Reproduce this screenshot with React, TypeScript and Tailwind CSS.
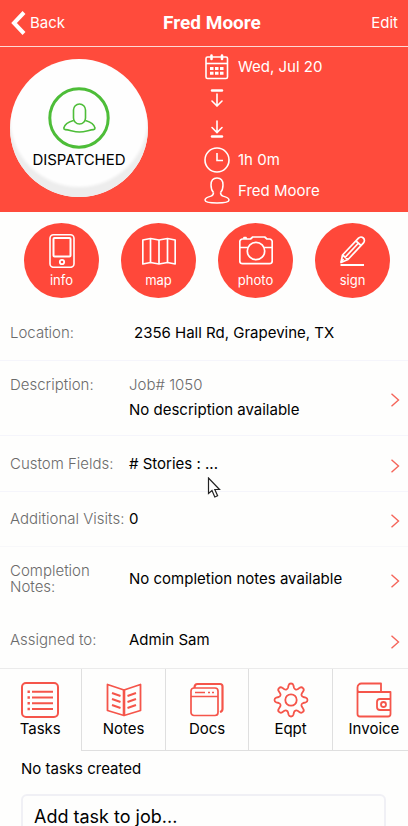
import type { ReactNode } from 'react';

const actions = [
  { label: 'info', icon: <PhoneIcon /> },
  { label: 'map', icon: <MapIcon /> },
  { label: 'photo', icon: <CameraIcon /> },
  { label: 'sign', icon: <PencilIcon /> },
];

const tabs = [
  { label: 'Tasks', icon: <TasksIcon /> },
  { label: 'Notes', icon: <NotesIcon /> },
  { label: 'Docs', icon: <DocsIcon /> },
  { label: 'Eqpt', icon: <GearIcon /> },
  { label: 'Invoice', icon: <WalletIcon /> },
];

function CalendarIcon() {
  return (
    <svg width="24" height="26" viewBox="0 0 24 26" fill="none" stroke="currentColor" strokeWidth="1.6">
      <rect x="1" y="3" width="21.5" height="21.5" rx="1.5" />
      <path d="M1 9.5h21.5" />
      <path d="M6.500 1.500v3.500M17 1.500v3.500" strokeWidth="2.6" strokeLinecap="round" />
      <g fill="currentColor" stroke="none">
        <path d="M5 13h3.500v3h-3.500zM10 13h3.500v3h-3.500zM15 13h3.500v3h-3.500zM5 17.800h3.500v3h-3.500zM10 17.800h3.500v3h-3.500zM15 17.800h3.500v3h-3.500z" />
      </g>
    </svg>
  );
}

function StartIcon() {
  return (
    <svg width="14" height="18" viewBox="0 0 14 18" fill="none" stroke="currentColor" strokeWidth="1.6" strokeLinecap="round">
      <path d="M2 1.500h10" strokeWidth="2.4" />
      <path d="M7 5v12M2 12l5 5 5-5" />
    </svg>
  );
}

function EndIcon() {
  return (
    <svg width="14" height="18" viewBox="0 0 14 18" fill="none" stroke="currentColor" strokeWidth="1.6" strokeLinecap="round">
      <path d="M7 1v11M2 7.500l5 5 5-5" />
      <path d="M2 16.500h10" strokeWidth="2.4" />
    </svg>
  );
}

function ClockIcon() {
  return (
    <svg width="26" height="26" viewBox="0 0 26 26" fill="none" stroke="currentColor" strokeWidth="1.6">
      <circle cx="13" cy="13" r="12" />
      <path d="M13 6v7.500h6" />
    </svg>
  );
}

function PersonIcon() {
  return (
    <svg width="26" height="27" viewBox="0 0 26 27" fill="none" stroke="currentColor" strokeWidth="1.5">
      <path d="M9.500 15.500C7.500 13.500 7 10.500 7 8c0-4.500 2.500-7 6-7s6 2.500 6 7c0 2.500-.5 5.500-2.500 7.500" />
      <path d="M9.500 15.500c0 2.500-.5 3-2.500 3.600-3.500 1-6 1.800-6 3.900C1 25 6 26 13 26s12-1 12-3c0-2.100-2.500-2.900-6-3.900-2-.6-2.500-1.100-2.500-3.600" />
    </svg>
  );
}

function DispatchedIcon() {
  return (
    <svg width="62" height="62" viewBox="0 0 62 62" fill="none" stroke="#4dbd38">
      <circle cx="31" cy="31" r="29.2" strokeWidth="3" />
      <g strokeWidth="1.6" strokeLinejoin="round">
        <rect x="25.5" y="17" width="12" height="20" rx="6" />
        <path d="M25.500 33.500C20 35 16.500 38 15.800 41c0 1 .5 1.500 1.500 1.600C22 43 26 45 31.500 45s9.500-2 14-2.400c1-.1 1.500-.6 1.500-1.600-.7-3-4.200-6-9.500-7.500" />
      </g>
    </svg>
  );
}

function PhoneIcon() {
  return (
    <svg width="34" height="34" viewBox="0 0 34 34" fill="none" stroke="currentColor">
      <rect x="5" y="0.8" width="24" height="32.5" rx="3.5" strokeWidth="1.6" />
      <rect x="8.5" y="4" width="17" height="18.500" rx="1" strokeWidth="2" />
      <circle cx="17" cy="28" r="2.2" strokeWidth="1.8" />
    </svg>
  );
}

function MapIcon() {
  return (
    <svg width="34" height="34" viewBox="0 0 34 34" fill="none" stroke="currentColor" strokeWidth="1.7" strokeLinejoin="round">
      <path d="M.8 6 8.500 4.500 17 6l8.500-1.500L33.200 6v24l-7.700-1.500L17 30l-8.500-1.500L.8 30z" />
      <path d="M8.500 4.500v24M17 6v24M25.500 4.500v24" />
    </svg>
  );
}

function CameraIcon() {
  return (
    <svg width="34" height="34" viewBox="0 0 34 34" fill="none" stroke="currentColor" strokeWidth="1.7" strokeLinejoin="round">
      <path d="M3.500 5h8l2.200-2h12L28 5h2.500a2.700 2.700 0 0 1 2.700 2.700V27a2.700 2.700 0 0 1-2.700 2.700h-27A2.700 2.700 0 0 1 .8 27V7.700A2.700 2.700 0 0 1 3.500 5z" />
      <path d="M.8 13.500h8M25.200 13.500h8M5 5V3.500h2V5" />
      <circle cx="17" cy="17" r="8.7" />
    </svg>
  );
}

function PencilIcon() {
  return (
    <svg width="34" height="34" viewBox="0 0 34 34" fill="none" stroke="currentColor" strokeWidth="1.7" strokeLinejoin="round">
      <path d="M5 28.500l1.500-7.500L22.500 4.200a3.200 3.200 0 0 1 5 4.600L12 25.500z" />
      <path d="M6.500 21l5.500 4.500M20 7l5 4.500M9 23.500 22.500 9M5 28.500l2.500-3.500" />
      <path d="M4.500 31H28" strokeWidth="2" />
    </svg>
  );
}

function TasksIcon() {
  return (
    <svg width="38" height="36" viewBox="0 0 38 36" fill="none" stroke="currentColor">
      <rect x="1" y="1" width="36" height="34" rx="4" strokeWidth="2" />
      <path d="M11 9.800h21M11 15.500h21M11 21.200h21M11 27h21" strokeWidth="1.900" />
      <path d="M6.500 9.800h2.400M6.500 15.500h2.400M6.500 21.200h2.400M6.500 27h2.400" strokeWidth="2.4" />
    </svg>
  );
}

function NotesIcon() {
  return (
    <svg width="38" height="36" viewBox="0 0 38 36" fill="none" stroke="currentColor" strokeWidth="1.8" strokeLinejoin="round">
      <path d="M2.500 2.500 19 8l16.500-5.500v26L19 33.500l-16.500-5z" />
      <path d="M19 8v25" strokeWidth="2.6" />
      <path d="M7 11l8.500 3M7 17l8.500 3M7 23l8.500 3M31 11l-8.500 3M31 17l-8.500 3M31 23l-8.500 3" strokeWidth="2" />
    </svg>
  );
}

function DocsIcon() {
  return (
    <svg width="38" height="36" viewBox="0 0 38 36" fill="none" stroke="currentColor" strokeWidth="1.7" strokeLinejoin="round">
      <rect x="3" y="6" width="27" height="27.500" rx="3" />
      <path d="M3 14.500h27M7 10.500h10M20 10.500h2M24 10.500h2" />
      <path d="M6.500 6c0-2.500 1-4 3-4H32a2.500 2.500 0 0 1 2.500 2.500V27c0 1.700-1 2.500-2.500 3" strokeWidth="2.2" />
    </svg>
  );
}

function GearIcon() {
  // eight rounded teeth around the hub
  return (
    <svg width="38" height="36" viewBox="0 0 38 36" fill="none" stroke="currentColor" strokeWidth="1.8" strokeLinejoin="round">
      <path d="M16.600 3.300a2.500 2.500 0 0 1 4.800 0l.6 2.500c.5 1.600 2.200 2.200 3.600 1.400l2.100-1.400a2.500 2.500 0 0 1 3.500 3.500l-1.400 2.100c-.8 1.400-.2 3.100 1.400 3.600l2.500.6a2.500 2.500 0 0 1 0 4.800l-2.500.6c-1.600.5-2.200 2.200-1.400 3.600l1.400 2.100a2.500 2.500 0 0 1-3.500 3.500l-2.100-1.400c-1.400-.8-3.100-.2-3.600 1.400l-.6 2.500a2.500 2.500 0 0 1-4.800 0l-.6-2.500c-.5-1.600-2.200-2.200-3.600-1.400l-2.100 1.400a2.500 2.500 0 0 1-3.500-3.500l1.400-2.100c.8-1.400.2-3.100-1.400-3.600l-2.500-.6a2.500 2.500 0 0 1 0-4.800l2.500-.6c1.600-.5 2.200-2.200 1.400-3.600L6.800 9.300a2.500 2.500 0 0 1 3.500-3.500l2.100 1.400c1.400.8 3.100.2 3.600-1.400z" />
      <circle cx="19" cy="18" r="5.7" />
    </svg>
  );
}

function WalletIcon() {
  return (
    <svg width="38" height="36" viewBox="0 0 38 36" fill="none" stroke="currentColor" strokeWidth="1.8" strokeLinejoin="round">
      <path d="M2.500 7v25a2.500 2.500 0 0 0 2.500 2.500h28a2.500 2.500 0 0 0 2.500-2.500V10H4.500A2 2 0 0 1 2.500 8V5.500a4 4 0 0 1 4-4H26V10" />
      <path d="M35.500 17H25a3 3 0 0 0-3 3v5a3 3 0 0 0 3 3h10.500" />
      <circle cx="28.500" cy="22.500" r="2.500" />
    </svg>
  );
}

function OpenButton({ label }: { label: string }) {
  return (
    <button type="button" aria-label={`Open ${label}`} className="mt-1 shrink-0 text-[#f5655a]">
      <svg width="10" height="14" viewBox="0 0 10 14" fill="none" stroke="currentColor" strokeWidth="1.4">
        <path d="M1.500.8 8.500 7l-7 6.200" />
      </svg>
    </button>
  );
}

function Meta({ icon, children }: { icon: ReactNode; children?: ReactNode }) {
  return (
    <div className="flex h-[31px] items-center gap-2">
      <span className="flex w-[26px] shrink-0 justify-center">{icon}</span>
      <span>{children}</span>
    </div>
  );
}

interface RowProps {
  label: string;
  className: string;
  link?: boolean;
  children: ReactNode;
}

function Row({ label, className, link = true, children }: RowProps) {
  return (
    <div className={`flex items-center pr-2 pl-[10px] ${className}`}>
      <dt className="w-[119px] shrink-0 leading-4 whitespace-pre-line text-[#6b6b6b]">{label}</dt>
      <dd className="min-w-0 flex-1 whitespace-nowrap">{children}</dd>
      {link && <OpenButton label={label} />}
    </div>
  );
}

export default function App() {
  return (
    <div className="relative h-screen overflow-hidden bg-[#fefefd] font-['Inter',sans-serif] text-[15px] leading-[22px] font-light text-black">
      <header className="grid h-[47px] grid-cols-[60px_1fr_44px] items-center border-b border-[#ffd9d4] bg-[#ff4b3c] px-[10px] font-normal text-white">
        <button type="button" className="flex items-center gap-1 justify-self-start">
          <svg width="16" height="24" viewBox="0 0 16 24" fill="none" stroke="currentColor" strokeWidth="4">
            <path d="M14 1.500 4 12l10 10.500" />
          </svg>
          Back
        </button>
        <h1 className="justify-self-center font-['Roboto',sans-serif] text-[19px] font-bold whitespace-nowrap">Fred Moore</h1>
        <button type="button" className="justify-self-end">Edit</button>
      </header>

      <section className="grid h-[165px] grid-cols-2 bg-[#ff4b3c] font-normal text-white">
        <div className="pt-3 pl-[10px]">
          <div className="flex h-[138px] w-[138px] flex-col items-center rounded-full bg-[#fefefe] pt-7 text-black shadow-[inset_0_-10px_3px_#ededed]">
            <DispatchedIcon />
            <span>DISPATCHED</span>
          </div>
        </div>
        <div className="flex flex-col pt-1">
          <Meta icon={<CalendarIcon />}>Wed, Jul 20</Meta>
          <Meta icon={<StartIcon />} />
          <Meta icon={<EndIcon />} />
          <Meta icon={<ClockIcon />}>1h 0m</Meta>
          <Meta icon={<PersonIcon />}>Fred Moore</Meta>
        </div>
      </section>

      <nav className="flex justify-between pt-[11px] pr-[18px] pl-6">
        {actions.map((action) => (
          <button
            key={action.label}
            type="button"
            className="flex h-[75px] w-[75px] flex-col items-center rounded-full bg-[#ff483a] pt-[11px] text-[13px] leading-4 font-normal text-white"
          >
            {action.icon}
            <span className="mt-1">{action.label}</span>
          </button>
        ))}
      </nav>

      <dl>
        <Row label="Location:" link={false} className="h-[63px] border-b border-[#f5f5fb] pt-2">
          <span className="pl-[5px] font-normal">2356 Hall Rd, Grapevine, TX</span>
        </Row>
        <div className="flex h-[75px] items-center border-b border-[#f5f5fb] pr-2 pl-[10px]">
          <dt className="w-[119px] shrink-0 self-start pt-[13px] text-[#6b6b6b]">Description:</dt>
          <dd className="flex-1 self-start pt-[13px]">
            <p className="text-[#6b6b6b]">Job# 1050</p>
            <p className="mt-[3px] font-normal">No description available</p>
          </dd>
          <OpenButton label="Description" />
        </div>
        <Row label="Custom Fields:" className="h-[56px] border-b border-[#f5f5fb]">
          <span className="font-normal"># Stories : ...</span>
        </Row>
        <Row label="Additional Visits:" className="h-[55px] border-b border-[#f8f8fa]">
          <span className="font-normal">0</span>
        </Row>
        <Row label={'Completion\nNotes:'} className="h-[64px]">
          <span className="font-normal">No completion notes available</span>
        </Row>
        <Row label="Assigned to:" className="h-[57px]">
          <span className="font-normal">Admin Sam</span>
        </Row>
      </dl>

      <div className="overflow-hidden border-t border-[#ebebeb] font-normal">
        <div role="tablist" className="-ml-px flex w-[102%]">
          {tabs.map((tab, index) => (
            <button
              key={tab.label}
              type="button"
              role="tab"
              aria-selected={index === 0}
              className={`flex h-[82px] flex-1 flex-col items-center pt-[13px] ${index === 0 ? '' : 'border-b border-l border-[#dfdfdf]'}`}
            >
              <span className="text-[#f5554a]">{tab.icon}</span>
              <span>{tab.label}</span>
            </button>
          ))}
        </div>
      </div>

      <section className="pr-[22px] pl-[21px] font-normal">
        <p className="pt-[7px]">No tasks created</p>
        <input
          type="text"
          aria-label="Add task to job"
          placeholder="Add task to job..."
          className="mt-[14px] h-11 w-full rounded-md border-2 border-[#f0f0f5] px-[11px] text-lg placeholder:text-black"
        />
      </section>

      {/* mouse pointer */}
      <svg className="absolute top-[477px] left-[207px]" width="14" height="22" viewBox="0 0 14 22" fill="white" stroke="#222" strokeWidth="1.2">
        <path d="M1.500 1v15.500l3.500-3 2.800 6.500 2.800-1.200-2.800-6.300h4.700z" />
      </svg>
    </div>
  );
}
